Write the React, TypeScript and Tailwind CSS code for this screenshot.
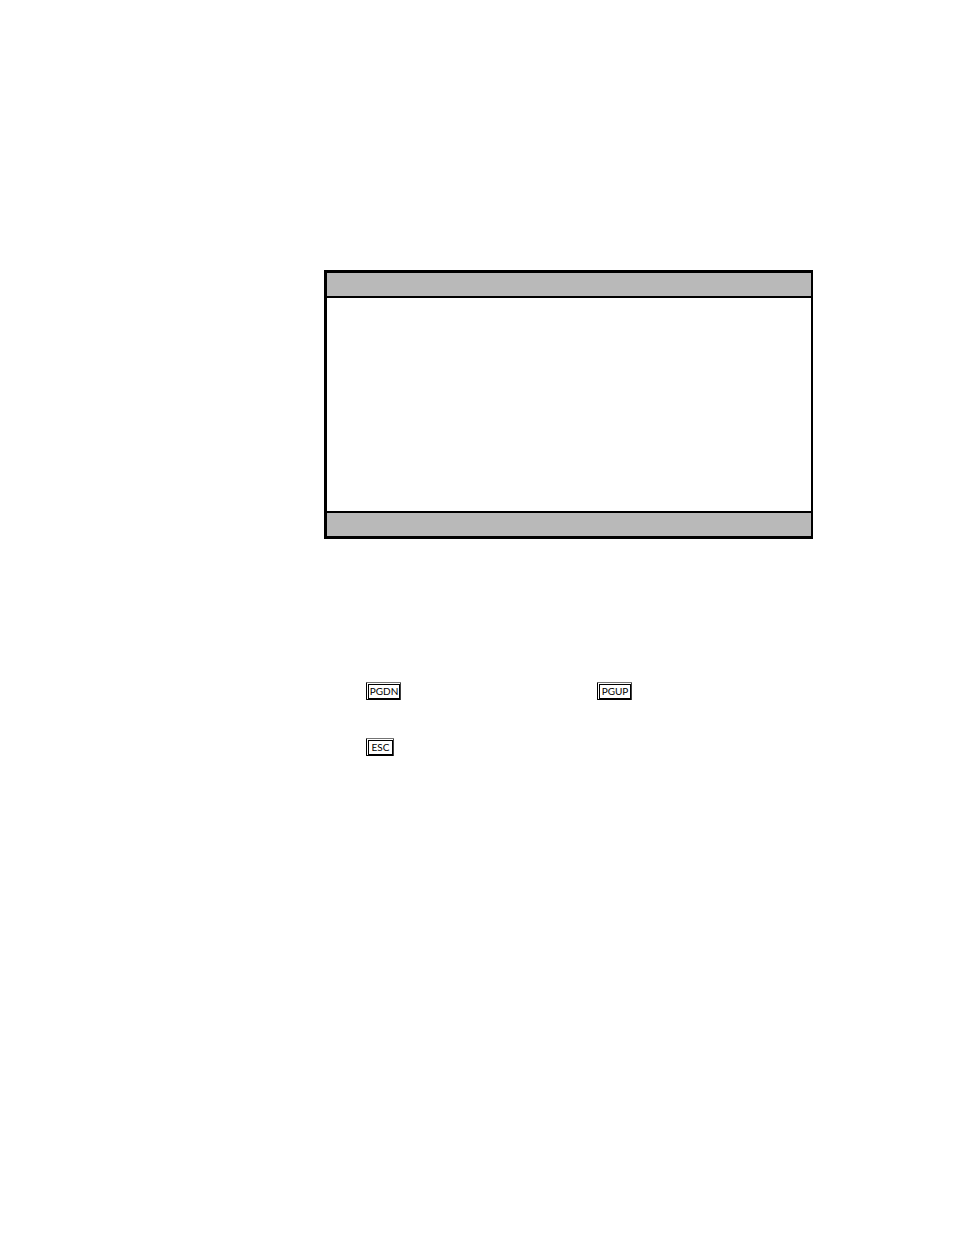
import React from "react";

type KeyCapProps = {
  label: string;
  className: string;
};

function KeyCap(props: KeyCapProps) {
  const { label, className } = props;

  return (
    <kbd
      className={`flex h-[18px] rounded-[1px] border border-black border-t-neutral-500 border-r-neutral-700 pt-px pl-px ${className}`}
    >
      <span className="flex flex-1 items-start justify-center border border-black font-[Lato,sans-serif] text-[10px] leading-3 text-black">
        {label}
      </span>
    </kbd>
  );
}

function ScreenPanel() {
  return (
    <section className="border-[3px] border-r-2 border-black bg-white">
      <header className="h-[25px] border-b-2 border-black bg-[#b9b9b9]" />
      <div className="h-[213px]" />
      <footer className="h-[25px] border-t-2 border-black bg-[#b9b9b9]" />
    </section>
  );
}

function App() {
  return (
    <main className="min-h-screen bg-white pt-[270px] pr-[141px] pl-[324px]">
      <ScreenPanel />
      <div className="mt-[143px] flex flex-col gap-[38px] pl-[42px]">
        <div className="flex gap-[196px]">
          <KeyCap label="PGDN" className="w-[35px]" />
          <KeyCap label="PGUP" className="w-[35px]" />
        </div>
        <KeyCap label="ESC" className="w-[28px]" />
      </div>
    </main>
  );
}

export default App;
